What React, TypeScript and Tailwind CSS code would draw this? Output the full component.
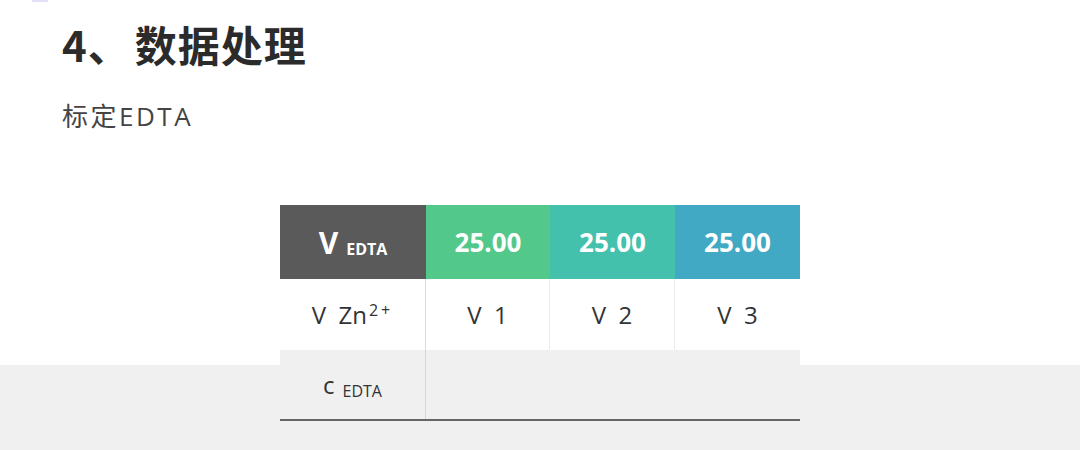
export default function App() {
    const samples = [
        { value: '25.00', color: 'bg-[#52c88a]', label: 'V 1' },
        { value: '25.00', color: 'bg-[#43c1ad]', label: 'V 2' },
        { value: '25.00', color: 'bg-[#42a9c4]', label: 'V 3' },
    ];

    return (
        <div className="w-[1080px] h-[450px] overflow-hidden bg-[linear-gradient(to_bottom,#ffffff_365px,#f0f0f0_365px)] font-['Open_Sans','Noto_Sans_CJK_SC',sans-serif]">
            {/* 顶部小标记 */}
            <div className="ml-[32px] w-[16px] h-[2px] bg-[#e4e0f5]" />

            <div className="px-[62px]">
                <h1 className="mt-[16px] text-[42px] leading-[52px] font-bold text-[#2b2b2b] tracking-[1px] font-['Noto_Sans_CJK_SC',sans-serif]">
                    4<span className="mr-[4px]">、</span>数据处理
                </h1>
                <p className="mt-[30px] text-[26px] leading-[32px] text-[#444] tracking-[2.5px]">标定EDTA</p>
            </div>

            {/* 表格 */}
            <div className="mt-[73px] ml-[280px] w-[520px]">
                <div className="grid grid-cols-[146px_124px_125px_125px] h-[74px] text-white font-bold">
                    <div className="bg-[#5a5a5a] flex items-center justify-center">
                        <span className="text-[30px]">V</span>
                        <span className="ml-[8px] mt-[14px] text-[16px]">EDTA</span>
                    </div>
                    {samples.map((s, i) => (
                        <div key={i} className={`${s.color} flex items-center justify-center text-[26px]`}>
                            {s.value}
                        </div>
                    ))}
                </div>
                <div className="grid grid-cols-[146px_124px_125px_125px] h-[71px] bg-white text-[24px] text-[#333]">
                    <div className="flex items-center justify-center border-r border-[#dcdcdc] whitespace-pre">
                        {'V  Zn'}<span className="text-[16px] -mt-[10px] ml-[2px] tracking-[3px]">2+</span>
                    </div>
                    {samples.map((s, i) => (
                        <div key={i} className={`flex items-center justify-center whitespace-pre ${i < 2 ? 'border-r border-[#ececec]' : ''}`}>
                            {s.label.replace(' ', '  ')}
                        </div>
                    ))}
                </div>
                <div className="grid grid-cols-[146px_374px] h-[71px] bg-[#f0f0f0] border-b-2 border-[#666]">
                    <div className="flex items-center justify-center border-r border-[#d6d6d6] text-[#333]">
                        <span className="text-[24px] mr-[8px]">c</span>
                        <span className="text-[16px] mt-[12px]">EDTA</span>
                    </div>
                    <div />
                </div>
            </div>
        </div>
    );
}
